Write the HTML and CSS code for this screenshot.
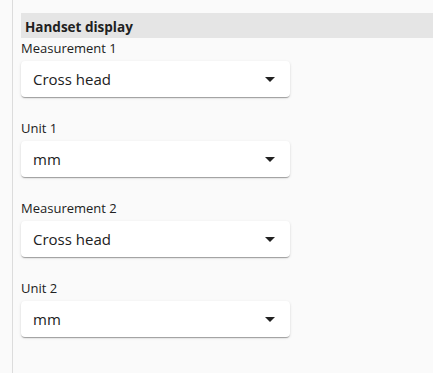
FILE: index.html
```html
<!DOCTYPE html>
<html lang="en">
<head>
    <meta charset="UTF-8">
    <meta name="viewport" content="width=device-width, initial-scale=1.0">
    <title>Handset display</title>
    <link rel="stylesheet" href="styles.css">
</head>
<body>
    <div class="panel">
        <div class="section-title">Handset display</div>

        <div class="field">
            <label>Measurement 1</label>
            <div class="select">
                <span>Cross head</span>
                <svg class="arrow" width="10" height="5" viewBox="0 0 10 5"><path d="M0 0h10L5 5z"/></svg>
            </div>
        </div>

        <div class="field">
            <label>Unit 1</label>
            <div class="select">
                <span>mm</span>
                <svg class="arrow" width="10" height="5" viewBox="0 0 10 5"><path d="M0 0h10L5 5z"/></svg>
            </div>
        </div>

        <div class="field">
            <label>Measurement 2</label>
            <div class="select">
                <span>Cross head</span>
                <svg class="arrow" width="10" height="5" viewBox="0 0 10 5"><path d="M0 0h10L5 5z"/></svg>
            </div>
        </div>

        <div class="field">
            <label>Unit 2</label>
            <div class="select">
                <span>mm</span>
                <svg class="arrow" width="10" height="5" viewBox="0 0 10 5"><path d="M0 0h10L5 5z"/></svg>
            </div>
        </div>
    </div>
</body>
</html>
```

FILE: styles.css
```css
html, body {
    height: 100%;
}

body {
    font-family: "Open Sans", "Noto Sans", sans-serif;
    background-color: #FAFAFA;
    color: #212121;
    margin: 0;
    padding: 0 0 0 12px;
    box-sizing: border-box;
    overflow: hidden;
}

.panel {
    border-left: 1px solid #DCDCDC;
    padding: 13px 0 0 8px;
    height: 100%;
    box-sizing: border-box;
}

.section-title {
    background-color: #E5E5E5;
    font-size: 13.5px;
    font-weight: bold;
    height: 25px;
    line-height: 29px;
    padding-left: 4px;
}

.field {
    display: flex;
    flex-direction: column;
    margin-bottom: 21px;
}

.field label {
    font-size: 13px;
    height: 23px;
    line-height: 21px;
}

.select {
    width: 269px;
    height: 36px;
    box-sizing: border-box;
    display: flex;
    align-items: center;
    justify-content: space-between;
    padding: 0 15px 0 12px;
    background-color: #FFFFFF;
    border-radius: 4px;
    box-shadow: 0 2px 1px -1px rgba(0, 0, 0, 0.2), 0 1px 1px 0 rgba(0, 0, 0, 0.14), 0 1px 3px 0 rgba(0, 0, 0, 0.12);
    font-size: 15px;
}

.arrow {
    fill: #212121;
}
```
